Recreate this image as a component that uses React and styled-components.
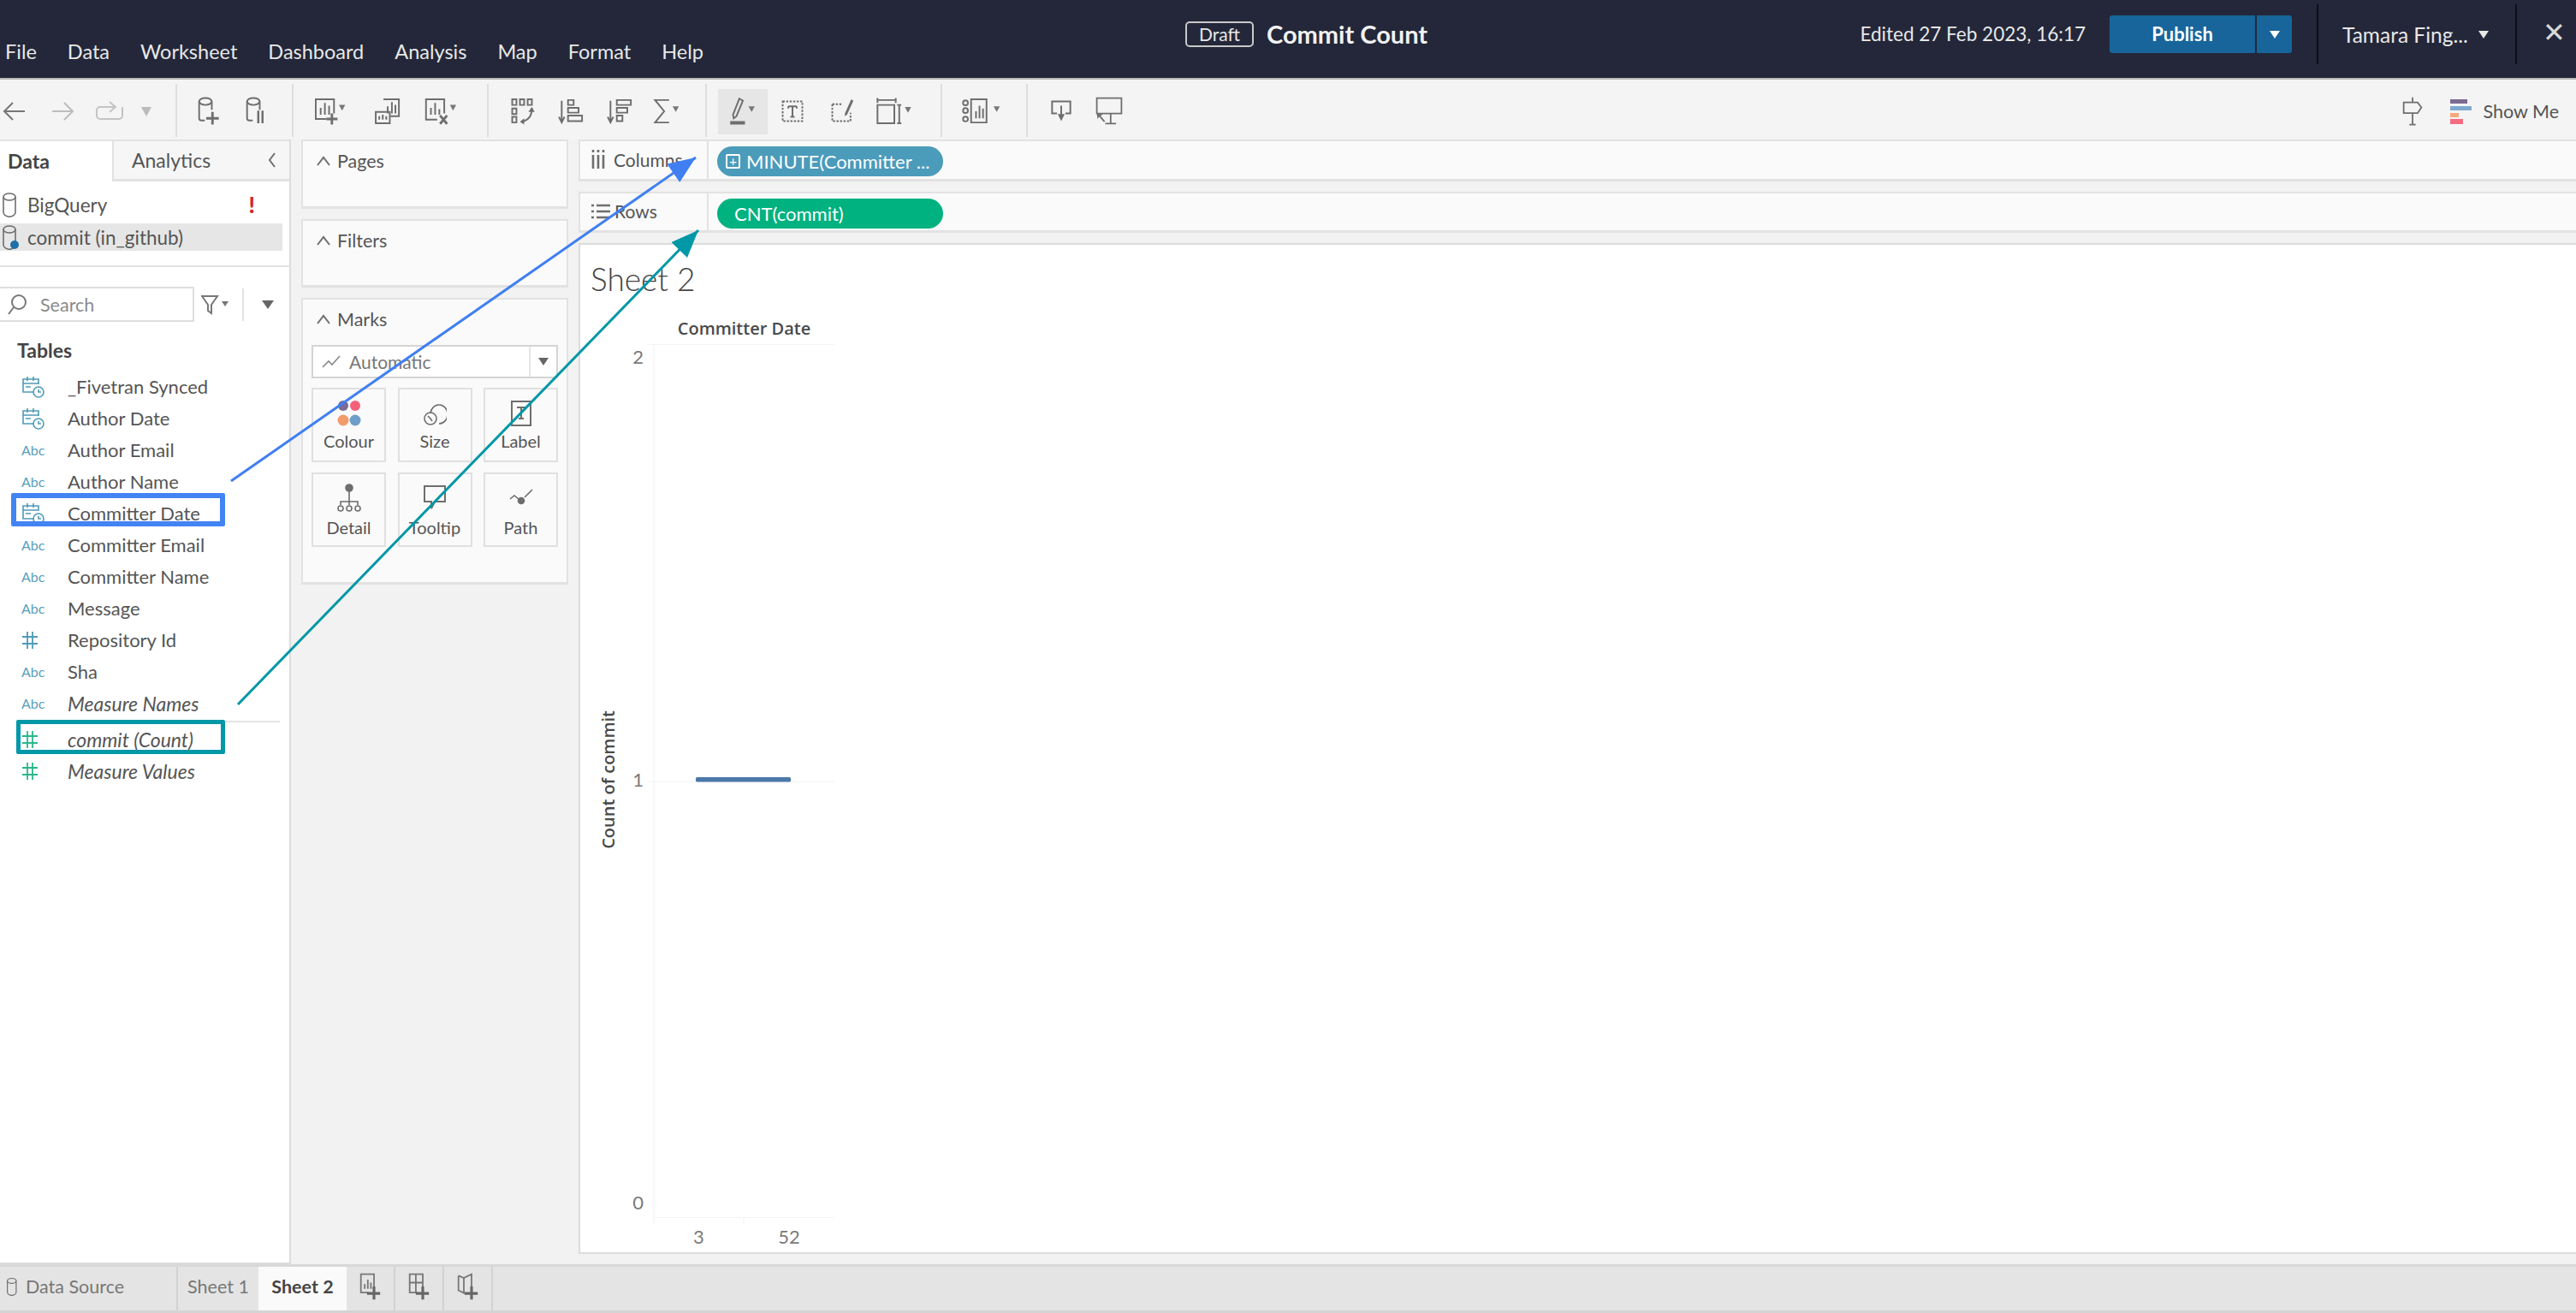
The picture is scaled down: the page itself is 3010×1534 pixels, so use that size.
import styled, { createGlobalStyle } from "styled-components";

const GlobalStyle = createGlobalStyle`
  html, body { margin: 0; padding: 0; background: #f2f2f2; }
  #root { width: 3010px; height: 1534px; overflow: hidden; }
  * { box-sizing: border-box; }
`;

const Page = styled.div`
  position: relative;
  width: 3010px;
  height: 1534px;
  display: flex;
  flex-direction: column;
  font-family: Lato, "Liberation Sans", sans-serif;
  color: #555;
  overflow: hidden;
`;

/* top bar */
const Header = styled.header`
  height: 93px;
  flex: none;
  display: flex;
  background: #232739;
  border-bottom: 2px solid #b8b8b8;
  color: #e8e8e8;
`;
const Menu = styled.nav`
  width: 1385px;
  flex: none;
  display: flex;
  gap: 36px;
  padding: 45px 0 0 6px;
  font-size: 23.5px;
  line-height: 30px;
`;
const TitleBox = styled.div`
  display: flex;
  align-items: flex-start;
  padding-top: 25px;
  gap: 15px;
`;
const Draft = styled.span`
  width: 80px;
  height: 30px;
  border: 2px solid #c9c9c9;
  border-radius: 5px;
  font-size: 21px;
  line-height: 26px;
  text-align: center;
`;
const Title = styled.span`
  font-size: 29px;
  font-weight: 700;
  line-height: 30px;
  color: #f2f2f2;
`;
const HeaderRight = styled.div`
  margin-left: auto;
  display: flex;
  align-items: flex-start;
`;
const Edited = styled.span`
  font-size: 22.5px;
  line-height: 30px;
  margin: 25px 28px 0 0;
`;
const Publish = styled.div`
  margin-top: 18px;
  width: 213px;
  height: 44px;
  display: flex;
  background: #17659b;
  border-radius: 3px;
  color: #fff;
`;
const PublishLabel = styled.span`
  flex: 1;
  text-align: center;
  font-size: 22px;
  font-weight: 700;
  line-height: 44px;
  border-right: 2px solid #232739;
`;
const PublishCaret = styled.span`
  width: 41px;
  display: flex;
  align-items: center;
  justify-content: center;
`;
const DownTriangle = styled.i`
  display: block;
  width: 0;
  height: 0;
  border-left: ${(p) => p.$size || 6}px solid transparent;
  border-right: ${(p) => p.$size || 6}px solid transparent;
  border-top: ${(p) => (p.$size || 6) * 1.5}px solid ${(p) => p.$color || "#fff"};
`;
const UserBox = styled.div`
  margin: 5px 0 0 29px;
  width: 234px;
  height: 70px;
  padding-left: 28px;
  display: flex;
  align-items: center;
  gap: 12px;
  border-left: 2px solid #0c0e16;
  border-right: 2px solid #0c0e16;
  font-size: 24.5px;
`;
const CloseBtn = styled.span`
  width: 69px;
  padding: 20px 0 0 30px;
  color: #d8d8d8;
  font-size: 32px;
  line-height: 34px;
`;

/* toolbar */
const Toolbar = styled.div`
  height: 70px;
  flex: none;
  display: flex;
  align-items: stretch;
  padding-top: 4px;
  background: #f4f4f4;
`;
const ToolGroup = styled.div`
  width: ${(p) => p.$w}px;
  flex: none;
  display: flex;
  align-items: center;
  padding: 0 0 0 ${(p) => p.$pad || 0}px;
  position: relative;
  &::after {
    content: "";
    position: absolute;
    right: 0;
    top: 1px;
    bottom: 3px;
    width: 2px;
    background: #dedede;
  }
`;
const Tool = styled.div`
  width: ${(p) => p.$w}px;
  height: 53px;
  flex: none;
  align-self: center;
  display: flex;
  align-items: center;
  justify-content: center;
  background: ${(p) => (p.$active ? "#e6e6e6" : "transparent")};
  svg {
    transform: scale(${(p) => p.$s || 0.82});
    stroke-width: ${(p) => (p.$s ? 2 : 2.4)};
  }
`;
const ToolRight = styled.div`
  margin-left: auto;
  display: flex;
  align-items: center;
  padding-right: 20px;
  gap: 8px;
  font-size: 21.5px;
  color: #555;
  & > svg:first-child {
    margin-right: 14px;
  }
`;

/* main area */
const Main = styled.div`
  flex: 1;
  min-height: 0;
  display: flex;
  background: #f2f2f2;
`;
const DataPane = styled.aside`
  width: 340px;
  flex: none;
  background: #fff;
  border-right: 2px solid #dcdcdc;
  border-bottom: 2px solid #dcdcdc;
`;
const Tabs = styled.div`
  display: flex;
  height: 49px;
  border-top: 2px solid #e2e2e2;
`;
const TabData = styled.div`
  width: 131px;
  padding-left: 9px;
  font-size: 23px;
  font-weight: 700;
  line-height: 46px;
  color: #444;
`;
const TabAnalytics = styled.div`
  flex: 1;
  display: flex;
  justify-content: space-between;
  align-items: center;
  padding: 0 14px 1px 21px;
  background: #f6f6f6;
  border-left: 2px solid #e2e2e2;
  border-bottom: 3px solid #e2e2e2;
  font-size: 23px;
`;
const SourceList = styled.div`
  padding-top: 11px;
  height: 100px;
  border-bottom: 2px solid #e2e2e2;
`;
const SourceRow = styled.div`
  height: 32px;
  width: 330px;
  display: flex;
  align-items: center;
  justify-content: space-between;
  padding: 0 32px 0 2px;
  font-size: 22.5px;
  background: ${(p) => (p.$active ? "#e6e6e6" : "transparent")};
  margin-bottom: 6px;
`;
const SourceName = styled.span`
  display: flex;
  align-items: center;
  gap: 10px;
`;
const Bang = styled.span`
  color: #d8232f;
  font-weight: 900;
  font-size: 26px;
`;
const SearchRow = styled.div`
  margin-top: 23px;
  display: flex;
  align-items: center;
  height: 41px;
`;
const SearchBox = styled.div`
  width: 227px;
  height: 41px;
  display: flex;
  align-items: center;
  gap: 15px;
  padding-left: 8px;
  border: 2px solid #dedede;
  border-left: none;
  color: #8a8a8a;
  font-size: 21.5px;
`;
const SearchTools = styled.div`
  display: flex;
  align-items: center;
  padding-left: 8px;
  height: 38px;
`;
const VSep = styled.span`
  width: 2px;
  height: 38px;
  margin: 0 21px 0 14px;
  background: #e2e2e2;
`;
const TablesLabel = styled.div`
  margin: 19px 0 0 20px;
  height: 29px;
  font-size: 23px;
  font-weight: 700;
  line-height: 29px;
  color: #444;
`;
const FieldList = styled.div`
  margin-top: 9px;
`;
const Field = styled.div`
  position: relative;
  height: 37px;
  display: flex;
  align-items: center;
  font-size: ${(p) => (p.$italic ? 23 : 22)}px;
  font-style: ${(p) => (p.$italic ? "italic" : "normal")};
  &::after {
    content: ${(p) => (p.$mark ? '""' : "none")};
    box-sizing: border-box;
    position: absolute;
    left: ${(p) => (p.$mark === "blue" ? 13 : 19)}px;
    width: ${(p) => (p.$mark === "blue" ? 250 : 244)}px;
    top: ${(p) => (p.$mark === "blue" ? -5 : -4)}px;
    height: ${(p) => (p.$mark === "blue" ? 39 : 40)}px;
    border: ${(p) => (p.$mark === "blue" ? 6 : 5)}px solid
      ${(p) => (p.$mark === "blue" ? "#4284f3" : "#0097a7")};
    border-radius: 2px;
  }
`;
const FieldIcon = styled.span`
  width: 79px;
  flex: none;
  padding-left: 25px;
  display: flex;
  align-items: center;
`;
const Abc = styled.span`
  font-size: 16px;
  font-style: normal;
  color: #5a9fbb;
`;
const FieldDivider = styled.div`
  height: 2px;
  margin: 2px 11px 1px 19px;
  background: #e4e4e4;
`;

/* shelves column */
const CardsColumn = styled.div`
  width: 336px;
  flex: none;
  padding: 0 12px 0 12px;
  display: flex;
  flex-direction: column;
  gap: 12px;
`;
const Card = styled.section`
  height: ${(p) => p.$h}px;
  background: #fafafa;
  border: 2px solid #e2e2e2;
  border-bottom-width: 3px;
  padding: 8px 10px 0;
`;
const CardTitle = styled.div`
  display: flex;
  align-items: center;
  height: 30px;
  gap: 6px;
  padding-left: 4px;
  font-size: 21.5px;
`;
const MarkSelect = styled.div`
  margin-top: 15px;
  height: 39px;
  display: flex;
  align-items: center;
  border: 2px solid #d4d4d4;
  background: #fff;
  font-size: 21px;
  color: #777;
`;
const MarkSelectLabel = styled.span`
  flex: 1;
  display: flex;
  align-items: center;
  gap: 10px;
  padding-left: 10px;
`;
const MarkSelectCaret = styled.span`
  width: 32px;
  height: 100%;
  display: flex;
  align-items: center;
  justify-content: center;
  border-left: 2px solid #e6e6e6;
`;
const MarkGrid = styled.div`
  margin-top: 11px;
  display: grid;
  grid-template-columns: repeat(3, 87px);
  grid-auto-rows: 87px;
  column-gap: 13.5px;
  row-gap: 12px;
`;
const MarkBtn = styled.div`
  border: 2px solid #e0e0e0;
  background: #fafafa;
  display: flex;
  flex-direction: column;
  align-items: center;
  padding-top: 11px;
  font-size: 20px;
  line-height: 26px;
  gap: 2px;
`;

/* viz column */
const VizColumn = styled.div`
  flex: 1;
  min-width: 0;
  display: flex;
  flex-direction: column;
  padding-bottom: 12px;
  gap: 12px;
`;
const Shelf = styled.div`
  height: 48px;
  display: flex;
  flex: none;
  background: #fafafa;
  border: 2px solid #e2e2e2;
  border-right: none;
  border-bottom-width: 3px;
  &:first-child { height: 49px; border-top-width: 2px; }
`;
const ShelfLabel = styled.div`
  width: 150px;
  flex: none;
  display: flex;
  align-items: center;
  gap: ${(p) => p.$gap}px;
  padding: 0 0 2px 13px;
  font-size: 21px;
  border-right: 2px solid #e2e2e2;
`;
const Pill = styled.div`
  margin: 6px 0 0 10px;
  width: 264px;
  height: 35px;
  border-radius: 18px;
  display: flex;
  align-items: center;
  gap: 7px;
  padding-left: ${(p) => p.$pad}px;
  background: ${(p) => p.$bg};
  color: #fff;
  font-size: 22px;
`;
const PillPlus = styled.span`
  width: 17px;
  height: 17px;
  border: 2px solid #fff;
  border-radius: 2px;
  display: flex;
  align-items: center;
  justify-content: center;
  font-size: 15px;
  line-height: 1;
`;
const Viz = styled.div`
  flex: 1;
  min-height: 0;
  background: #fff;
  border: 2px solid #dcdcdc;
  border-right: none;
  padding: 18px 0 0 12px;
`;
const SheetTitle = styled.div`
  font-size: 37px;
  font-weight: 300;
  line-height: 44px;
  color: #444;
`;
const Chart = styled.div`
  margin-top: 17px;
  display: grid;
  grid-template-columns: 26px 34px 218px;
  grid-template-rows: 37px 1028px 35px;
  margin-left: 7px;
`;
const ColumnTitle = styled.div`
  grid-column: 3;
  padding-left: 7px;
  text-align: center;
  font-family: "Open Sans", sans-serif;
  font-size: 20px;
  font-weight: 600;
  line-height: 38px;
  color: #4a4a4a;
`;
const RowTitleCell = styled.div`
  grid-column: 1;
  grid-row: 2;
  display: flex;
  align-items: center;
  justify-content: center;
  padding-bottom: 10px;
`;
const RowTitle = styled.div`
  writing-mode: vertical-rl;
  transform: rotate(180deg);
  font-family: "Open Sans", sans-serif;
  font-size: 20px;
  font-weight: 600;
  color: #4a4a4a;
`;
const YTicks = styled.div`
  grid-column: 2;
  grid-row: 2;
  display: flex;
  flex-direction: column;
  justify-content: space-between;
  align-items: flex-end;
  padding: 3px 5px 13px 0;
  font-size: 22px;
  line-height: 24px;
  color: #7a7a7a;
`;
const Plot = styled.svg`
  grid-column: 3;
  grid-row: 2;
  overflow: visible;
  display: block;
`;
const XTicks = styled.div`
  grid-column: 3;
  grid-row: 3;
  margin-left: 7px;
  display: grid;
  grid-template-columns: 105px 106px;
  padding-top: 3px;
  text-align: center;
  font-size: 22px;
  line-height: 24px;
  color: #7a7a7a;
`;

/* bottom tabs */
const TabBar = styled.div`
  height: 57px;
  flex: none;
  display: flex;
  align-items: stretch;
  background: #e4e4e4;
  border-top: 3px solid #d8d8d8;
  border-bottom: 3px solid #d4d4d4;
  font-size: 21.5px;
  color: #777;
`;
const SourceTab = styled.div`
  width: 208px;
  display: flex;
  align-items: center;
  gap: 8px;
  padding: 0 0 6px 7px;
  border-right: 2px solid #d2d2d2;
`;
const SheetTab = styled.div`
  width: ${(p) => p.$w}px;
  display: flex;
  align-items: center;
  justify-content: center;
  padding-bottom: 6px;
  background: ${(p) => (p.$active ? "#fafafa" : "transparent")};
  color: ${(p) => (p.$active ? "#444" : "#777")};
  font-weight: ${(p) => (p.$active ? 700 : 400)};
`;
const AddTab = styled.div`
  width: 57px;
  display: flex;
  align-items: center;
  justify-content: center;
  padding-bottom: 6px;
  border-right: 2px solid #d2d2d2;
`;

/* annotation arrows on top of the screenshot */
const Overlay = styled.svg`
  position: absolute;
  left: 0;
  top: 0;
  pointer-events: none;
`;

/* icons */
const Ico = styled.svg`
  display: block;
  flex: none;
  fill: none;
  stroke: ${(p) => p.$c || "#6e6e6e"};
  stroke-width: ${(p) => p.$sw || 2};
`;
const Caret = ({ x = 34, y = 16 }) => (
  <path d={`M${x} ${y}h9l-4.5 8z`} fill="#777" stroke="none" />
);

const IconBack = ({ c }) => (
  <Ico $c={c} width="30" height="40" viewBox="0 0 30 40">
    <path d="M28 20H4M14 10L4 20l10 10" />
  </Ico>
);
const IconForward = () => (
  <Ico $c="#bdbdbd" width="30" height="40" viewBox="0 0 30 40">
    <path d="M2 20h24M16 10l10 10-10 10" />
  </Ico>
);
const IconRedo = () => (
  <Ico $c="#c4c4c4" width="36" height="40" viewBox="0 0 36 40">
    <path d="M24 15H7a4 4 0 0 0-4 4v6a4 4 0 0 0 4 4h22a4 4 0 0 0 4-4v-10M18 9l7 6-7 6" />
  </Ico>
);
const IconSmallCaret = () => (
  <Ico width="16" height="40" viewBox="0 0 16 40">
    <path d="M2 15h12l-6 11z" fill="#bbb" stroke="none" />
  </Ico>
);
const Cylinder = () => (
  <>
    <ellipse cx="14" cy="7" rx="9" ry="5" />
    <path d="M5 7v24a3 3 0 0 0 3 3h5M23 7v12" />
  </>
);
const IconNewDs = () => (
  <Ico width="40" height="42" viewBox="0 0 40 42">
    <Cylinder />
    <path d="M24 22v18M15 31h18" strokeWidth="3.5" />
  </Ico>
);
const IconPauseDs = () => (
  <Ico width="40" height="42" viewBox="0 0 40 42">
    <Cylinder />
    <path d="M21 20v18M27 20v18" strokeWidth="3" />
  </Ico>
);
const IconNewSheet = () => (
  <Ico width="50" height="42" viewBox="0 0 50 42">
    <path d="M18 32H3V4h26v20M10 26V16M16 26V9M22 26V13" />
    <path d="M26 24v16M18 32h16" strokeWidth="3.5" />
    <Caret x={36} y={12} />
  </Ico>
);
const IconDup = () => (
  <Ico width="40" height="42" viewBox="0 0 40 42">
    <path d="M14 4h22v24H24M20 24V14M26 24V8M31 24V12" />
    <path d="M3 22h20v16H3zM8 33v-5M13 33v-7M18 33v-5" />
  </Ico>
);
const IconClear = () => (
  <Ico width="50" height="42" viewBox="0 0 50 42">
    <path d="M20 33H4V4h26v20M11 26V16M17 26V9M23 26v-8" />
    <path d="M24 27l10 12M34 27L24 39" strokeWidth="3.5" />
    <Caret x={38} y={12} />
  </Ico>
);
const IconSwap = () => (
  <Ico width="40" height="42" viewBox="0 0 40 42">
    <path d="M6 4h6v8H6zM17 4h6v8h-6zM28 4h6v8h-6zM6 17h6v8H6zM6 29h6v8H6z" />
    <path d="M34 17c0 10-5 17-15 19" />
    <path d="M29 22l5-7 4 7M23 31l-6 5 6 4" fill="#6e6e6e" stroke="none" />
  </Ico>
);
const IconSortA = () => (
  <Ico width="36" height="42" viewBox="0 0 36 42">
    <path d="M5 6v30M1 29l4 8 4-8" />
    <path d="M14 5h8v7h-8zM14 16h15v7H14zM14 27h20v8H14z" />
  </Ico>
);
const IconSortD = () => (
  <Ico width="36" height="42" viewBox="0 0 36 42">
    <path d="M5 6v30M1 29l4 8 4-8" />
    <path d="M14 5h20v7H14zM14 16h15v7H14zM14 27h8v8h-8z" />
  </Ico>
);
const IconSigma = () => (
  <Ico width="46" height="42" viewBox="0 0 46 42">
    <path d="M24 5H4l13 16L4 37h20" />
    <Caret x={29} y={14} />
  </Ico>
);
const IconPen = () => (
  <Ico width="46" height="42" viewBox="0 0 46 42">
    <path d="M18 3l5 3-9 22-4 3-1-5z" />
    <path d="M5 35h21v5H5z" fill="#6e6e6e" stroke="none" />
    <Caret x={31} y={14} />
  </Ico>
);
const IconTextBox = () => (
  <Ico width="34" height="40" viewBox="0 0 34 40">
    <path d="M3 6h28v28H3z" strokeDasharray="3 2" />
    <path d="M11 13h12M17 13v15M14 28h6M11 13v3M23 13v3" />
  </Ico>
);
const IconAnno = () => (
  <Ico width="34" height="40" viewBox="0 0 34 40">
    <path d="M3 10h14M3 10v24h26V22" strokeDasharray="3 2" />
    <path d="M30 3l3 2-9 20-3 2v-4z" fill="#6e6e6e" stroke="none" />
  </Ico>
);
const IconFit = () => (
  <Ico width="52" height="42" viewBox="0 0 52 42">
    <path d="M2 5h26M2 2v7M28 2v7M2 12h24v26H2zM33 12v26M30 12h6M30 38h6" />
    <Caret x={41} y={15} />
  </Ico>
);
const IconCards = () => (
  <Ico width="56" height="42" viewBox="0 0 56 42">
    <circle cx="5" cy="9" r="3.5" />
    <circle cx="5" cy="20" r="3.5" />
    <circle cx="5" cy="32" r="3.5" />
    <path d="M13 4h22v33H13zM20 31V21M25 31V13M30 31V17" />
    <Caret x={45} y={14} />
  </Ico>
);
const IconDownload = () => (
  <Ico width="34" height="34" viewBox="0 0 34 34">
    <path d="M11 20H4V3h26v17h-7M17 9v14" />
    <path d="M12 21h10l-5 10z" fill="#6e6e6e" stroke="none" />
  </Ico>
);
const IconPresent = () => (
  <Ico width="40" height="38" viewBox="0 0 40 38">
    <path d="M4 22V2h32v20H4zM22 22v13M15 35h14" />
    <path d="M4 22l8 1-3 2 6 7-2 1-6-7-2 3z" fill="#6e6e6e" stroke="none" />
  </Ico>
);
const IconSign = () => (
  <Ico width="30" height="34" viewBox="0 0 36 46" $sw={2.4}>
    <path d="M18 1v8M4 9h22l6 8-6 9H4zM18 26v18M13 44h10" />
  </Ico>
);
const IconShowMe = () => (
  <svg width="26" height="30" viewBox="0 0 26 30" style={{ display: "block" }}>
    <rect x="1" y="1" width="20" height="5" fill="#7b6a92" />
    <rect x="1" y="9" width="25" height="5" fill="#7fa9d0" />
    <rect x="1" y="17" width="10" height="5" fill="#f6a97c" />
    <rect x="1" y="24" width="15" height="6" fill="#f56c80" />
  </svg>
);
const IconCylinderSmall = ({ dot, w = 20, h = 30 }) => (
  <Ico $sw={1.6} width={w} height={h} viewBox="0 0 20 30">
    <ellipse cx="9" cy="6" rx="7" ry="4" />
    <path d="M2 6v18a4 3 0 0 0 14 0V6" />
    {dot && <circle cx="15" cy="24" r="5" fill="#1f6fa8" stroke="none" />}
  </Ico>
);
const IconCalendar = () => (
  <Ico $c="#4f9ab8" width="28" height="28" viewBox="0 0 28 28" $sw={1.6}>
    <path d="M15 20H2V5h18v6M2 10h18M7 2v5M14 2v5M5 14h6" />
    <circle cx="20" cy="20" r="6" />
    <path d="M20 17v3h3" />
  </Ico>
);
const IconHash = ({ c }) => (
  <Ico $c={c} width="20" height="24" viewBox="0 0 20 24" $sw={1.8}>
    <path d="M7 2v20M13 2v20M1 8h18M1 16h18" />
  </Ico>
);
const IconChevronUp = () => (
  <Ico width="20" height="16" viewBox="0 0 20 16">
    <path d="M3 13l7-9 7 9" />
  </Ico>
);
const IconChevronLeft = () => (
  <Ico width="12" height="22" viewBox="0 0 12 22">
    <path d="M9 3l-6 8 6 8" />
  </Ico>
);
const IconSearch = () => (
  <Ico $c="#777" width="24" height="26" viewBox="0 0 24 26">
    <circle cx="14" cy="10" r="8" />
    <path d="M8 16l-6 8" />
  </Ico>
);
const IconFilter = () => (
  <Ico $c="#777" width="34" height="26" viewBox="0 0 34 26">
    <path d="M1 3h18l-7 10v10l-4-3v-7z" />
    <path d="M24 9h8l-4 6z" fill="#777" stroke="none" />
  </Ico>
);
const IconColumns = () => (
  <Ico $c="#6e6e6e" width="16" height="26" viewBox="0 0 16 26" $sw={2.6}>
    <path d="M2 8v16M8 8v16M14 8v16M2 2v3M8 2v3M14 2v3" />
  </Ico>
);
const IconRows = () => (
  <Ico $c="#6e6e6e" width="22" height="20" viewBox="0 0 22 20" $sw={2.6}>
    <path d="M6 3h16M6 10h16M6 17h16M0 3h3M0 10h3M0 17h3" />
  </Ico>
);
const IconAuto = () => (
  <Ico $c="#888" width="22" height="18" viewBox="0 0 22 18" $sw={1.6}>
    <path d="M1 15l7-7 4 4 9-10" />
  </Ico>
);
const IconColour = () => (
  <svg width="28" height="34" viewBox="0 0 28 34" style={{ display: "block" }}>
    <circle cx="7" cy="8" r="6" fill="#7b6a92" />
    <circle cx="21" cy="8" r="6" fill="#f4607a" />
    <circle cx="7" cy="25" r="6.5" fill="#f39c6b" />
    <circle cx="21" cy="25" r="6.5" fill="#6f9fc8" />
  </svg>
);
const IconSize = () => (
  <Ico width="28" height="34" viewBox="0 0 28 34" $sw={1.6}>
    <path d="M9 17a10 11 0 1 1 10 12" />
    <circle cx="9" cy="23" r="7" />
    <path d="M6 20l3 3 2 3" />
  </Ico>
);
const IconLabel = () => (
  <Ico width="28" height="34" viewBox="0 0 28 34">
    <path d="M3 3h22v28H3z" />
    <path d="M9 10h10M14 10v13M11 23h6" />
  </Ico>
);
const IconDetail = () => (
  <Ico width="28" height="36" viewBox="0 0 28 36" $sw={1.6}>
    <circle cx="14" cy="5" r="4" fill="#6e6e6e" />
    <path d="M14 9v12M4 25v-4h20v4M14 21v4" />
    <circle cx="4" cy="29" r="3" />
    <circle cx="14" cy="29" r="3" />
    <circle cx="24" cy="29" r="3" />
  </Ico>
);
const IconTooltip = () => (
  <Ico width="28" height="36" viewBox="0 0 28 36">
    <path d="M2 3h24v18H14l-4 8v-8H2z" />
  </Ico>
);
const IconPath = () => (
  <Ico width="28" height="36" viewBox="0 0 28 36" $sw={1.6}>
    <path d="M1 18l5-4 5 4M18 16l9-9" />
    <circle cx="14" cy="20" r="3.5" fill="#6e6e6e" />
  </Ico>
);
const IconAddSheet = () => (
  <Ico $c="#777" width="27" height="36" viewBox="0 0 30 40">
    <path d="M13 28H3V4h17v16M8 23v-6M12 23V11M16 23v-8" />
    <path d="M20 20v17M11 29h17" strokeWidth="3.5" stroke="#666" />
  </Ico>
);
const IconAddDash = () => (
  <Ico $c="#777" width="27" height="36" viewBox="0 0 30 40">
    <path d="M13 28H3V4h17v16M3 15h17M11 4v24" />
    <path d="M20 20v17M11 29h17" strokeWidth="3.5" stroke="#666" />
  </Ico>
);
const IconAddStory = () => (
  <Ico $c="#777" width="27" height="36" viewBox="0 0 30 40">
    <path d="M3 6l7 3 10-5v16M3 6v19l8 4M10 9v20" />
    <path d="M20 20v17M11 29h17" strokeWidth="3.5" stroke="#666" />
  </Ico>
);

const fields = [
  { kind: "date", name: "_Fivetran Synced" },
  { kind: "date", name: "Author Date" },
  { kind: "abc", name: "Author Email" },
  { kind: "abc", name: "Author Name" },
  { kind: "date", name: "Committer Date", mark: "blue" },
  { kind: "abc", name: "Committer Email" },
  { kind: "abc", name: "Committer Name" },
  { kind: "abc", name: "Message" },
  { kind: "hash", name: "Repository Id" },
  { kind: "abc", name: "Sha" },
  { kind: "abc", name: "Measure Names", italic: true },
];

const measures = [
  { name: "commit (Count)", mark: "teal" },
  { name: "Measure Values" },
];

const marks = [
  { name: "Colour", icon: <IconColour /> },
  { name: "Size", icon: <IconSize /> },
  { name: "Label", icon: <IconLabel /> },
  { name: "Detail", icon: <IconDetail /> },
  { name: "Tooltip", icon: <IconTooltip /> },
  { name: "Path", icon: <IconPath /> },
];

function fieldIcon(f) {
  if (f.kind === "date") return <IconCalendar />;
  if (f.kind === "hash") return <IconHash c="#4f9ab8" />;
  return <Abc>Abc</Abc>;
}

export default function App() {
  return (
    <Page>
      <GlobalStyle />
      <Header>
        <Menu>
          {["File", "Data", "Worksheet", "Dashboard", "Analysis", "Map", "Format", "Help"].map((m) => (
            <span key={m}>{m}</span>
          ))}
        </Menu>
        <TitleBox>
          <Draft>Draft</Draft>
          <Title>Commit Count</Title>
        </TitleBox>
        <HeaderRight>
          <Edited>Edited 27 Feb 2023, 16:17</Edited>
          <Publish>
            <PublishLabel>Publish</PublishLabel>
            <PublishCaret>
              <DownTriangle $size={6} />
            </PublishCaret>
          </Publish>
          <UserBox>
            Tamara Fing...
            <DownTriangle $size={6} $color="#e8e8e8" />
          </UserBox>
          <CloseBtn>✕</CloseBtn>
        </HeaderRight>
      </Header>

      <Toolbar>
        <ToolGroup $w={207}>
          <Tool $w={32} $s={1}><IconBack c="#777" /></Tool>
          <Tool $w={84} $s={1}><IconForward /></Tool>
          <Tool $w={24} $s={1}><IconRedo /></Tool>
          <Tool $w={62} $s={1}><IconSmallCaret /></Tool>
        </ToolGroup>
        <ToolGroup $w={136} $pad={10}>
          <Tool $w={56}><IconNewDs /></Tool>
          <Tool $w={56}><IconPauseDs /></Tool>
        </ToolGroup>
        <ToolGroup $w={228} $pad={11}>
          <Tool $w={66}><IconNewSheet /></Tool>
          <Tool $w={66}><IconDup /></Tool>
          <Tool $w={58}><IconClear /></Tool>
        </ToolGroup>
        <ToolGroup $w={255} $pad={10}>
          <Tool $w={57}><IconSwap /></Tool>
          <Tool $w={57}><IconSortA /></Tool>
          <Tool $w={57}><IconSortD /></Tool>
          <Tool $w={57}><IconSigma /></Tool>
        </ToolGroup>
        <ToolGroup $w={275} $pad={13}>
          <Tool $w={58} $active><IconPen /></Tool>
          <Tool $w={58}><IconTextBox /></Tool>
          <Tool $w={58}><IconAnno /></Tool>
          <Tool $w={64}><IconFit /></Tool>
        </ToolGroup>
        <ToolGroup $w={100} $pad={10}>
          <Tool $w={72}><IconCards /></Tool>
        </ToolGroup>
        <Tool $w={11} />
        <Tool $w={56}><IconDownload /></Tool>
        <Tool $w={56} $s={0.9}><IconPresent /></Tool>
        <ToolRight>
          <IconSign />
          <Tool $w={38} $s={1}><IconShowMe /></Tool>
          <span>Show Me</span>
        </ToolRight>
      </Toolbar>

      <Main>
        <DataPane>
          <Tabs>
            <TabData>Data</TabData>
            <TabAnalytics>
              Analytics
              <IconChevronLeft />
            </TabAnalytics>
          </Tabs>
          <SourceList>
            <SourceRow>
              <SourceName><IconCylinderSmall />BigQuery</SourceName>
              <Bang>!</Bang>
            </SourceRow>
            <SourceRow $active>
              <SourceName><IconCylinderSmall dot />commit (in_github)</SourceName>
            </SourceRow>
          </SourceList>
          <SearchRow>
            <SearchBox><IconSearch />Search</SearchBox>
            <SearchTools>
              <IconFilter />
              <VSep />
              <DownTriangle $size={7} $color="#666" />
            </SearchTools>
          </SearchRow>
          <TablesLabel>Tables</TablesLabel>
          <FieldList>
            {fields.map((f) => (
              <Field key={f.name} $italic={f.italic} $mark={f.mark}>
                <FieldIcon>{fieldIcon(f)}</FieldIcon>
                {f.name}
              </Field>
            ))}
            <FieldDivider />
            {measures.map((f) => (
              <Field key={f.name} $italic $mark={f.mark}>
                <FieldIcon><IconHash c="#2bb58a" /></FieldIcon>
                {f.name}
              </Field>
            ))}
          </FieldList>
        </DataPane>

        <CardsColumn>
          <Card $h={81}>
            <CardTitle><IconChevronUp />Pages</CardTitle>
          </Card>
          <Card $h={80}>
            <CardTitle><IconChevronUp />Filters</CardTitle>
          </Card>
          <Card $h={335}>
            <CardTitle><IconChevronUp />Marks</CardTitle>
            <MarkSelect>
              <MarkSelectLabel><IconAuto />Automatic</MarkSelectLabel>
              <MarkSelectCaret><DownTriangle $size={6} $color="#666" /></MarkSelectCaret>
            </MarkSelect>
            <MarkGrid>
              {marks.map((m) => (
                <MarkBtn key={m.name}>
                  {m.icon}
                  {m.name}
                </MarkBtn>
              ))}
            </MarkGrid>
          </Card>
        </CardsColumn>

        <VizColumn>
          <Shelf>
            <ShelfLabel $gap={10}><IconColumns />Columns</ShelfLabel>
            <Pill $bg="#4b9bba" $pad={10}>
              <PillPlus>+</PillPlus>
              MINUTE(Committer ...
            </Pill>
          </Shelf>
          <Shelf>
            <ShelfLabel $gap={5}><IconRows />Rows</ShelfLabel>
            <Pill $bg="#00b280" $pad={20}>CNT(commit)</Pill>
          </Shelf>
          <Viz>
            <SheetTitle>Sheet 2</SheetTitle>
            <Chart>
              <ColumnTitle>Committer Date</ColumnTitle>
              <RowTitleCell>
                <RowTitle>Count of commit</RowTitle>
              </RowTitleCell>
              <YTicks>
                <span>2</span>
                <span>1</span>
                <span>0</span>
              </YTicks>
              <Plot width="218" height="1028" viewBox="0 0 218 1028">
                <path d="M0 0.5H218M0 511.5H218M7 1020.5H218M7 0V1028M112 1020V1028" stroke="#f3f3f3" strokeWidth="1.2" fill="none" />
                <rect x="56" y="506" width="111" height="5.5" rx="1.5" fill="#4a78a8" />
              </Plot>
              <XTicks>
                <span>3</span>
                <span>52</span>
              </XTicks>
            </Chart>
          </Viz>
        </VizColumn>
      </Main>

      <TabBar>
        <SourceTab><IconCylinderSmall w={15} h={22} />Data Source</SourceTab>
        <SheetTab $w={94}>Sheet 1</SheetTab>
        <SheetTab $w={103} $active>Sheet 2</SheetTab>
        <AddTab><IconAddSheet /></AddTab>
        <AddTab><IconAddDash /></AddTab>
        <AddTab><IconAddStory /></AddTab>
      </TabBar>

      <Overlay width="3010" height="1534" viewBox="0 0 3010 1534">
        <defs>
          <marker id="headBlue" markerUnits="userSpaceOnUse" markerWidth="34" markerHeight="28" refX="32" refY="13" orient="auto">
            <path d="M0 0L32 13L0 26z" fill="#3f7ff2" />
          </marker>
          <marker id="headTeal" markerUnits="userSpaceOnUse" markerWidth="34" markerHeight="28" refX="32" refY="13" orient="auto">
            <path d="M0 0L32 13L0 26z" fill="#0097a7" />
          </marker>
        </defs>
        <line x1="270" y1="562" x2="813" y2="184" stroke="#3f7ff2" strokeWidth="3" markerEnd="url(#headBlue)" />
        <line x1="278" y1="823" x2="816" y2="269" stroke="#0097a7" strokeWidth="3" markerEnd="url(#headTeal)" />
      </Overlay>
    </Page>
  );
}
